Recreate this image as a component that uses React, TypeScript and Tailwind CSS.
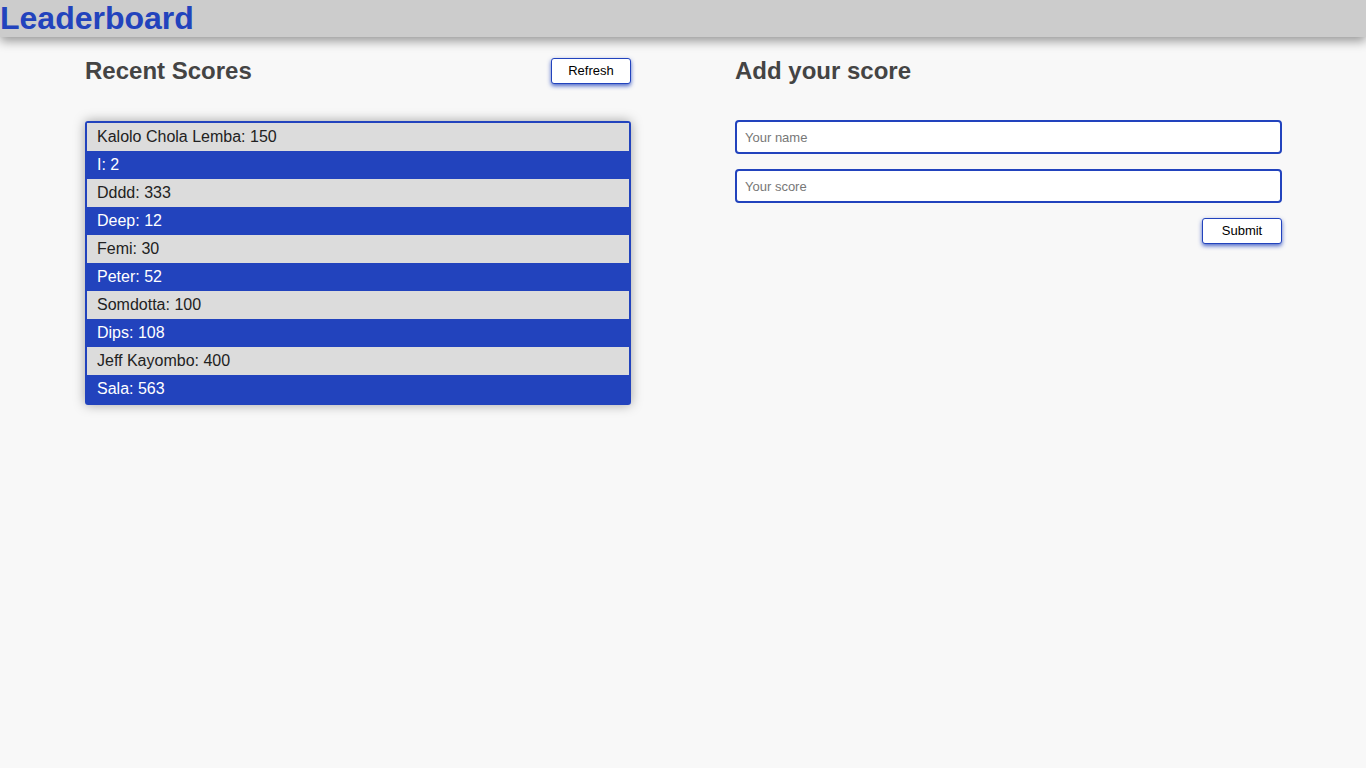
import { useState } from 'react';

const SCORES = [
  { name: 'Kalolo Chola Lemba', score: 150 },
  { name: 'I', score: 2 },
  { name: 'Dddd', score: 333 },
  { name: 'Deep', score: 12 },
  { name: 'Femi', score: 30 },
  { name: 'Peter', score: 52 },
  { name: 'Somdotta', score: 100 },
  { name: 'Dips', score: 108 },
  { name: 'Jeff Kayombo', score: 400 },
  { name: 'Sala', score: 563 },
];

const App = () => {
  const [scores] = useState(SCORES);
  const [name, setName] = useState('');
  const [score, setScore] = useState('');

  return (
    <div className="min-h-screen bg-[#f8f8f8] font-['Liberation_Sans',Arial,sans-serif]">
      {/* Header */}
      <header className="h-[37px] bg-[#cccccc] shadow-[0_4px_10px_rgba(0,0,0,0.4)]">
        <h1 className="text-[32px] leading-[37px] font-bold text-[#2243bd]">Leaderboard</h1>
      </header>

      <main className="flex pl-[85px] gap-[104px]">
        {/* Recent scores */}
        <section className="w-[546px]">
          <div className="flex items-center justify-between h-[32px] mt-[18px] mb-[34px]">
            <h2 className="text-[24px] font-bold text-[#444444]">Recent Scores</h2>
            <button className="w-[80px] h-[26px] bg-white border border-[#2243bd] rounded-[3px] text-[13px] text-black shadow-[0_2px_4px_rgba(34,67,189,0.8)]">
              Refresh
            </button>
          </div>
          <ul className="border-2 border-[#2243bd] rounded-[3px] shadow-[0_0_12px_rgba(0,0,0,0.35)]">
            {scores.map((s, i) => (
              <li
                key={i}
                className={`h-[28px] leading-[28px] pl-[10px] text-[16px] ${
                  i % 2 === 0 ? 'bg-[#dcdcdc] text-[#222222]' : 'bg-[#2243bd] text-white'
                }`}
              >
                {s.name}: {s.score}
              </li>
            ))}
          </ul>
        </section>

        {/* Add score */}
        <section className="w-[547px]">
          <div className="flex items-center h-[32px] mt-[18px] mb-[33px]">
            <h2 className="text-[24px] font-bold text-[#444444]">Add your score</h2>
          </div>
          <form
            className="flex flex-col"
            onSubmit={(e) => {
              e.preventDefault();
              setName('');
              setScore('');
            }}
          >
            <input
              value={name}
              onChange={(e) => setName(e.target.value)}
              placeholder="Your name"
              className="h-[34px] px-[8px] bg-white border-2 border-[#2243bd] rounded-[4px] text-[13px] text-black placeholder:text-[#777777] outline-none"
            />
            <input
              value={score}
              onChange={(e) => setScore(e.target.value)}
              placeholder="Your score"
              className="h-[34px] mt-[15px] px-[8px] bg-white border-2 border-[#2243bd] rounded-[4px] text-[13px] text-black placeholder:text-[#777777] outline-none"
            />
            <div className="flex justify-end mt-[15px]">
              <button
                type="submit"
                className="w-[80px] h-[26px] bg-white border border-[#2243bd] rounded-[3px] text-[13px] text-black shadow-[0_2px_4px_rgba(34,67,189,0.8)]"
              >
                Submit
              </button>
            </div>
          </form>
        </section>
      </main>
    </div>
  );
};

export default App;
